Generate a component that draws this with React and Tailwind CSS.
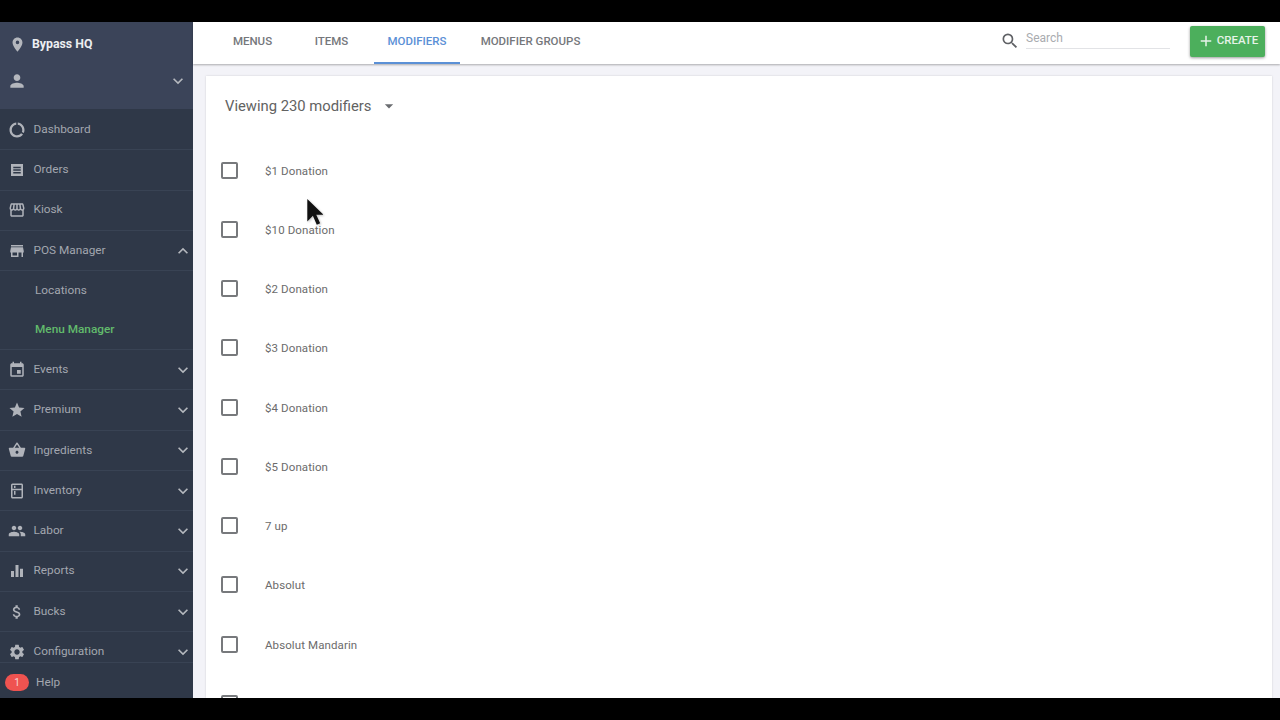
import React from "react";
import { MdLocationOn, MdPerson, MdExpandMore, MdExpandLess, MdDataUsage, MdStorefront, MdStore, MdEvent, MdStar, MdShoppingBasket, MdOutlineKitchen, MdPeople, MdEqualizer, MdAttachMoney, MdSettings, MdSearch, MdAdd, MdArrowDropDown } from "react-icons/md";

const Orders = (p) => (
  <svg viewBox="0 0 24 24" fill="currentColor" {...p}>
    <path d="M4 4h16v16H4zM7 7.500v2h10v-2zm0 3.500v2h10v-2zm0 3.500v2h10v-2z" fillRule="evenodd" />
  </svg>
);

const top = [
  ["Dashboard", MdDataUsage],
  ["Orders", Orders],
  ["Kiosk", MdStorefront],
];
const rest = [
  ["Events", MdEvent],
  ["Premium", MdStar],
  ["Ingredients", MdShoppingBasket],
  ["Inventory", MdOutlineKitchen],
  ["Labor", MdPeople],
  ["Reports", MdEqualizer],
  ["Bucks", MdAttachMoney],
  ["Configuration", MdSettings],
];
const rows = ["$1 Donation", "$10 Donation", "$2 Donation", "$3 Donation", "$4 Donation", "$5 Donation", "7 up", "Absolut", "Absolut Mandarin", ""];

function NavItem({ label, Icon, chevron, open }) {
  return (
    <div className="flex h-[40.3px] shrink-0 items-center border-b border-[#394354] pl-[8px] text-[11.800px] text-[#a3a7af]">
      <Icon className="h-[18px] w-[18px] shrink-0 text-[#b0b3ba]" />
      <span className="ml-[7.500px] flex-1">{label}</span>
      {chevron && (open ? <MdExpandLess className="h-[20px] w-[20px] text-[#b5b8be]" /> : <MdExpandMore className="h-[20px] w-[20px] text-[#b5b8be]" />)}
    </div>
  );
}

function Tab({ label, active, className }) {
  return (
    <div className={`flex h-full items-center justify-center border-b-2 text-[11.500px] font-medium ${active ? "border-[#5b90d6] text-[#5b90d6]" : "border-transparent text-[#75777b]"} ${className}`}>
      {label}
    </div>
  );
}

export default function App() {
  return (
    <div className="relative flex h-[720px] w-[1280px] flex-col overflow-hidden bg-black font-['Roboto',sans-serif]">
      <div className="h-[22px] shrink-0" />
      <div className="flex min-h-0 flex-1 bg-[#f3f3f8]">
        <aside className="flex w-[193px] shrink-0 flex-col bg-[#2f3848]">
          <div className="h-[87px] shrink-0 bg-[#3b4459] pl-[7px] pr-[5px]">
            <div className="flex h-[43px] items-center pt-[1px]">
              <MdLocationOn className="ml-[2px] h-[17px] w-[17px] text-[#b4b7bd]" />
              <span className="ml-[6px] text-[12.300px] font-bold text-[#eceef1]">Bypass HQ</span>
            </div>
            <div className="flex h-[31px] items-center justify-between">
              <MdPerson className="h-[20px] w-[20px] text-[#b4b7bd]" />
              <MdExpandMore className="h-[20px] w-[20px] text-[#b5b8be]" />
            </div>
          </div>
          <nav className="min-h-0 flex-1 overflow-hidden pt-[1px]">
            {top.map(([l, I]) => <NavItem key={l} label={l} Icon={I} />)}
            <NavItem label="POS Manager" Icon={MdStore} chevron open />
            <div className="flex h-[39.500px] items-center pb-[1px] pl-[35px] text-[11.800px] text-[#a3a7af]">Locations</div>
            <div className="flex h-[39.500px] items-center border-b border-[#394354] pl-[35px] text-[11.800px] font-medium text-[#62bb6c]">Menu Manager</div>
            {rest.map(([l, I]) => <NavItem key={l} label={l} Icon={I} chevron />)}
          </nav>
          <div className="flex h-[36px] shrink-0 items-center border-t border-[#394354] pl-[5px] pt-[4px] text-[11.800px] text-[#a3a7af]">
            <span className="flex h-[17px] w-[24px] items-center justify-center rounded-full bg-[#ef5350] text-[10px] text-[#f6d6d5]">1</span>
            <span className="ml-[7px]">Help</span>
          </div>
        </aside>
        <main className="flex min-w-0 flex-1 flex-col">
          <header className="relative flex h-[42px] shrink-0 items-center bg-white pr-[15px] shadow-[0_1px_2px_rgba(0,0,0,0.3)]">
            <div className="flex h-full pl-[20px]">
              <Tab label="MENUS" className="w-[79px]" />
              <Tab label="ITEMS" className="w-[79px]" />
              <Tab label="MODIFIERS" active className="ml-[3px] w-[86px]" />
              <Tab label="MODIFIER GROUPS" className="ml-[19px] w-[103px]" />
            </div>
            <div className="ml-auto flex items-center pb-[4px]">
              <MdSearch className="h-[20px] w-[20px] translate-x-[1px] text-[#5f6165]" />
              <div className="ml-[7px] mr-[20px] h-[22px] w-[144px] -translate-y-[3px] border-b border-[#e2e3e6] text-[12px] leading-[22px] text-[#a9abaf]">Search</div>
              <button className="flex h-[31px] w-[75px] items-center justify-center rounded-[2px] bg-[#4caf5c] text-[11.500px] font-medium text-[#e6f3e8] shadow-[0_1px_3px_rgba(0,0,0,0.4)]">
                <MdAdd className="mr-[2px] h-[18px] w-[18px]" />CREATE
              </button>
            </div>
          </header>
          <section className="ml-[13px] mr-[8px] mt-[12px] min-h-0 flex-1 overflow-hidden bg-white shadow-[0_0_2px_rgba(0,0,0,0.15)]">
            <div className="flex h-[60px] items-center pl-[19px] pt-[1px] text-[14.800px] text-[#626262]">
              <span>Viewing 230 modifiers</span>
              <MdArrowDropDown className="ml-[8px] h-[20px] w-[20px] -translate-y-[1px] text-[#6a6c70]" />
            </div>
            <div className="pt-[5px]">
              {rows.map((r, i) => (
                <div key={i} className="flex h-[59.250px] items-center pl-[15px] text-[#6b6b6b]">
                  <span className="-mt-[1px] h-[17px] w-[17px] rounded-[2px] border-2 border-[#77797c]" />
                  <span className="ml-[27px] mt-[1px] text-[11.500px] tracking-[0.1px]">{r}</span>
                </div>
              ))}
            </div>
          </section>
        </main>
      </div>
      <div className="h-[22px] shrink-0" />
      <svg viewBox="0 0 16 26" className="absolute left-[305px] top-[198px] h-[29px] w-[18px] drop-shadow-[1px_1px_1px_rgba(0,0,0,0.25)]">
        <path d="M2 1v20l5-5 3.500 8 3-1.300-3.500-7.700h6.500z" fill="#111" />
      </svg>
    </div>
  );
}
